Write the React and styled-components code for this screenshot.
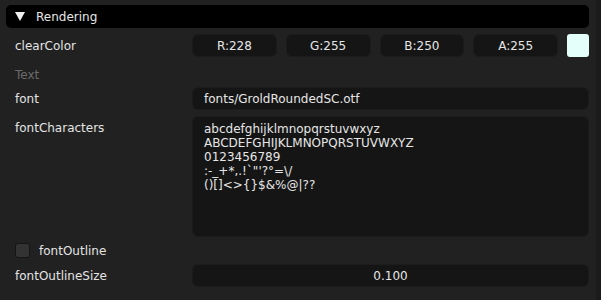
import React from 'react';
import styled, { createGlobalStyle } from 'styled-components';

const Global = createGlobalStyle`
  html, body {
    margin: 0;
    padding: 0;
    background: #1b1b1b;
  }
  body {
    font-family: 'DejaVu Sans', sans-serif;
    font-size: 12px;
  }
`;

const Panel = styled.div`
  width: 596px;
  height: 300px;
  background: #212121;
  box-sizing: border-box;
  padding: 5px 7px 0 6px;
  color: #e4e4e4;
  font-family: 'DejaVu Sans', sans-serif;
  font-size: 12px;
`;

const Header = styled.div`
  height: 23px;
  background: #000;
  border-radius: 5px;
  display: flex;
  align-items: center;
  padding-left: 9px;
  gap: 11px;
  color: #e6e6e6;
`;

const Arrow = styled.span`
  width: 0;
  height: 0;
  border-left: 5px solid transparent;
  border-right: 5px solid transparent;
  border-top: 9px solid #f0f0f0;
`;

const Body = styled.div`
  display: flex;
  flex-direction: column;
  gap: 6px;
  padding-top: 6px;
  padding-left: 9px;
`;

const Row = styled.div`
  display: grid;
  grid-template-columns: 177px 1fr;
  height: ${(p) => p.h}px;
`;

const Label = styled.div`
  display: flex;
  align-items: ${(p) => (p.top != null ? 'flex-start' : 'center')};
  padding-top: ${(p) => p.top || 0}px;
  color: ${(p) => (p.dim ? '#6b6b6b' : '#e4e4e4')};
`;

const Controls = styled.div`
  display: flex;
  gap: 9px;
  align-items: stretch;
`;

const Box = styled.div`
  flex: 1;
  background: #151515;
  border: 1px solid #1c1c1c;
  border-radius: 6px;
  display: flex;
  align-items: center;
  justify-content: ${(p) => (p.left ? 'flex-start' : 'center')};
  padding: 0 11px;
  color: #e6e6e6;
`;

const Swatch = styled.div`
  width: 22px;
  background: ${(p) => p.color};
  border-radius: 3px;
`;

const Area = styled.div`
  flex: 1;
  background: #151515;
  border: 1px solid #1c1c1c;
  border-radius: 6px;
  padding: 5px 11px;
  line-height: 14px;
  white-space: pre;
  color: #e6e6e6;
`;

const CheckRow = styled.div`
  display: flex;
  align-items: center;
  gap: 9px;
  height: 15px;
`;

const Check = styled.span`
  width: 13px;
  height: 13px;
  background: #333;
  border: 1px solid #151515;
  border-radius: 3px;
`;

const chars = `abcdefghijklmnopqrstuvwxyz
ABCDEFGHIJKLMNOPQRSTUVWXYZ
0123456789
:-_+*,.!\`"'?°=\\/
()[]<>{}$&%@|??`;

export default function App() {
  return (
    <>
      <Global />
      <Panel>
        <Header>
          <Arrow />
          <span>Rendering</span>
        </Header>
        <Body>
          <Row h={23}>
            <Label>clearColor</Label>
            <Controls>
              <Box>R:228</Box>
              <Box>G:255</Box>
              <Box>B:250</Box>
              <Box>A:255</Box>
              <Swatch color="#e4fffa" />
            </Controls>
          </Row>
          <Row h={18}>
            <Label dim top={5}>Text</Label>
          </Row>
          <Row h={23}>
            <Label>font</Label>
            <Controls>
              <Box left>fonts/GroldRoundedSC.otf</Box>
            </Controls>
          </Row>
          <Row h={121}>
            <Label top={5}>fontCharacters</Label>
            <Controls>
              <Area>{chars}</Area>
            </Controls>
          </Row>
          <CheckRow>
            <Check />
            <span>fontOutline</span>
          </CheckRow>
          <Row h={23}>
            <Label>fontOutlineSize</Label>
            <Controls>
              <Box>0.100</Box>
            </Controls>
          </Row>
        </Body>
      </Panel>
    </>
  );
}
